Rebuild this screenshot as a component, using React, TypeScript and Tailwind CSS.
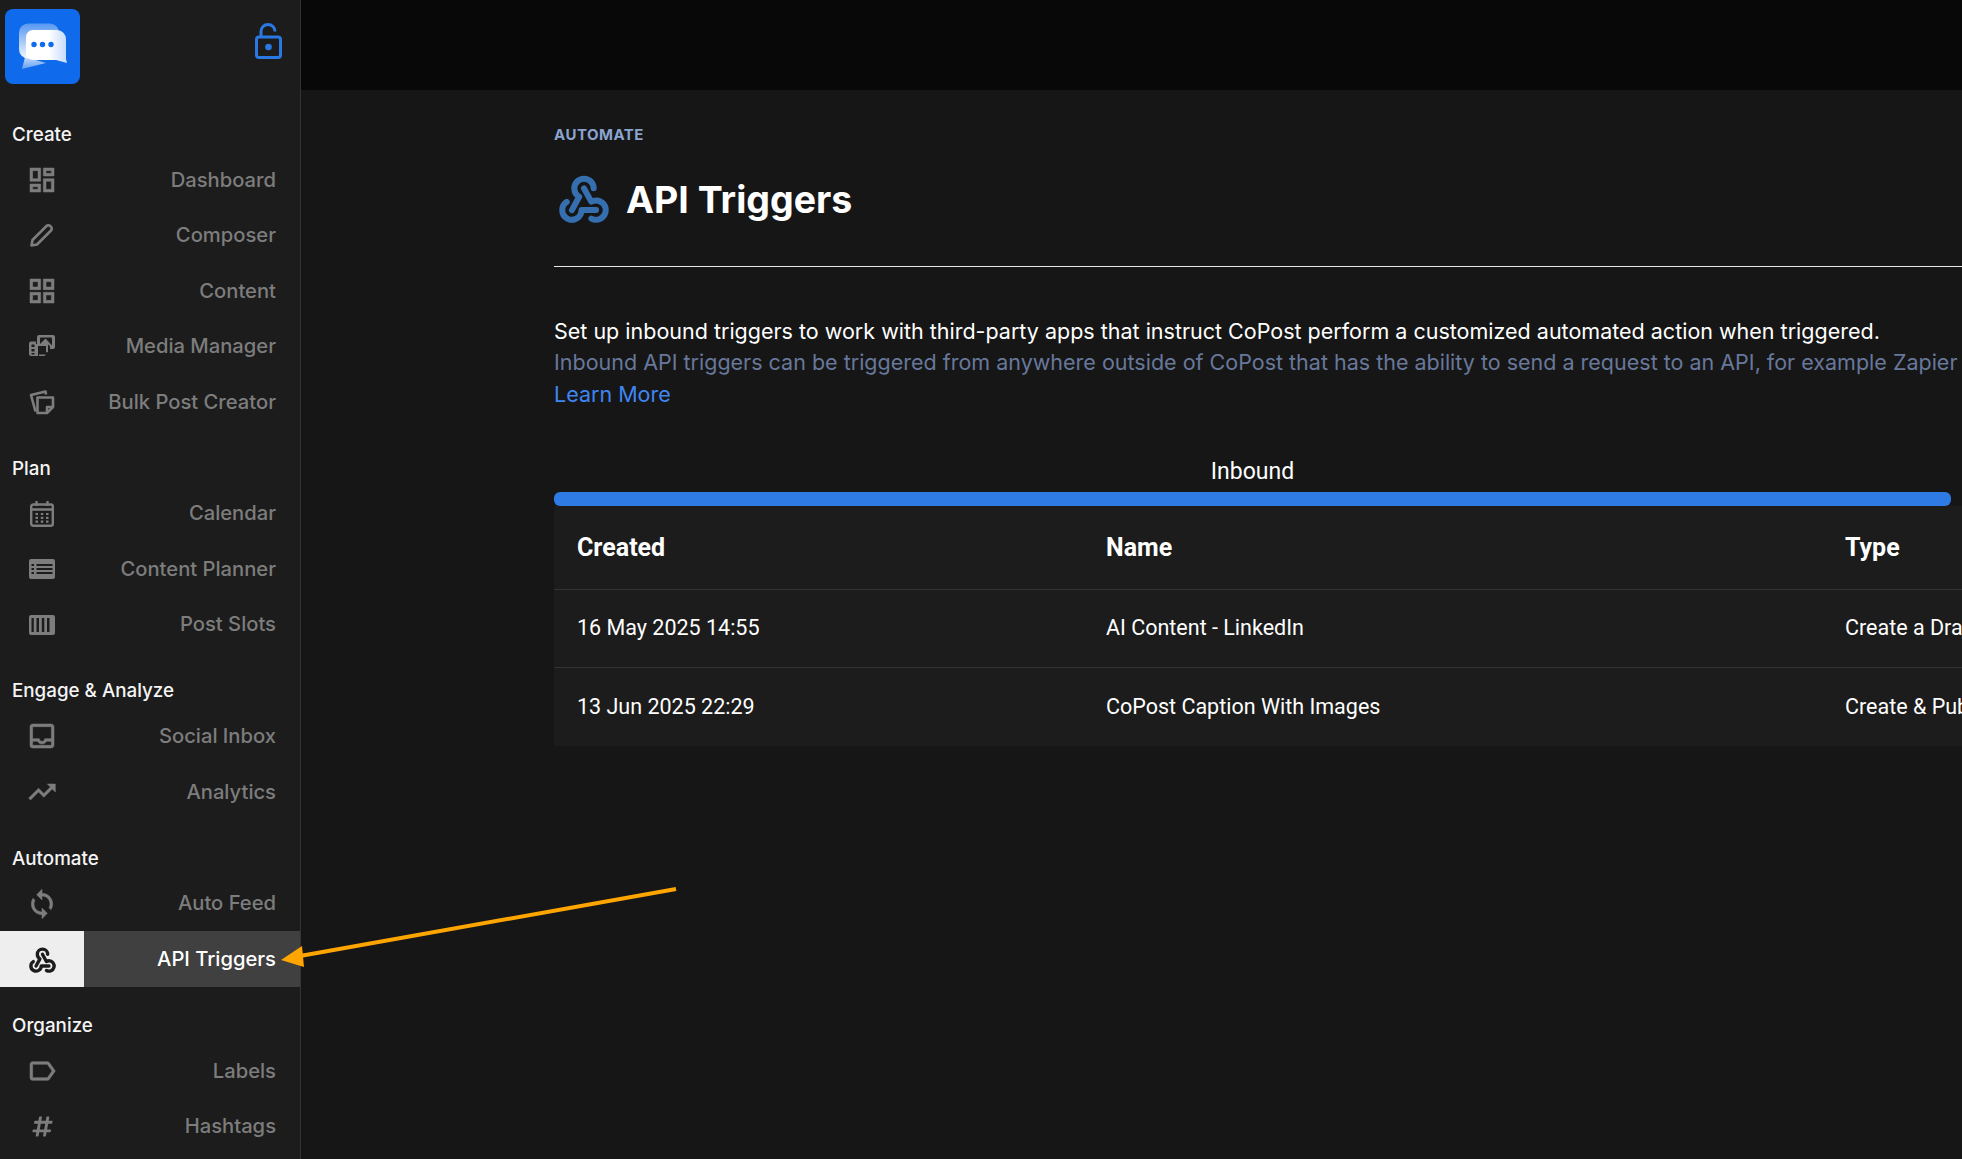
import { Fragment, type ReactNode } from 'react'
import {
  MdOutlineDashboard,
  MdOutlineGridView,
  MdOutlineInbox,
  MdTrendingUp,
  MdOutlineLabel,
  MdSync,
} from 'react-icons/md'
import { TbWebhook } from 'react-icons/tb'
import { FaHashtag } from 'react-icons/fa'

type NavItem = { label: string; icon: ReactNode; active?: boolean }
type NavGroup = { title: string; items: NavItem[] }

// the md icons start with an invisible fill-none square, so only thicken the paths after it
const ico = 'h-[32px] w-[32px] [&_path+path]:stroke-current [&_path+path]:stroke-[0.4px]'

function PencilIcon() {
  return (
    <svg viewBox="0 0 24 24" className="h-[24px] w-[24px]" fill="none" stroke="currentColor" strokeWidth="2.600" strokeLinejoin="round">
      <path d="M1.500 22.500 2.500 17 16.500 3a2.600 2.600 0 0 1 3.700 0l.8.800a2.600 2.600 0 0 1 0 3.700L7 21.500z" />
    </svg>
  )
}

function MediaIcon() {
  return (
    <svg viewBox="0 0 26 22" className="h-[22px] w-[26px]" fill="currentColor">
      <path fillRule="evenodd" d="M10 0h14a2 2 0 0 1 2 2v10a2 2 0 0 1-2 2h-3v-1.500a3 3 0 0 0-3-3H8V2a2 2 0 0 1 2-2zM11 9l5.500-5.500L23 10.500V3.500a1 1 0 0 0-1-1H12a1 1 0 0 0-1 1z" />
      <path fillRule="evenodd" d="M2 6.500h5v2.500h12v8a1.500 1.500 0 0 1-2 0v-6h-8v10H2a2 2 0 0 1-2-2V8.500a2 2 0 0 1 2-2zM2.500 9.500v2.500h3V9.500zm0 4.500v2.500h3V14zm0 4v1.500h3V18z" />
      <path d="M10 19.500h7a3 3 0 0 1-2 1.500h-5z" />
    </svg>
  )
}

function BulkIcon() {
  return (
    <svg viewBox="0 0 26 26" className="h-[26px] w-[26px]" fill="none" stroke="currentColor" strokeWidth="2.600" strokeLinejoin="round">
      <path d="M6.500 22.500 2 6l14.500-3.500.6 3" />
      <path d="M8.500 8.500h15.500v9.500l-6 6H8.500z" />
      <path d="M18 24v-6h6" />
    </svg>
  )
}

function CalendarIcon() {
  return (
    <svg viewBox="0 0 24 26" className="h-[26px] w-[24px]" fill="none" stroke="currentColor" strokeWidth="2.400">
      <rect x="1.200" y="3.500" width="21.600" height="21.300" rx="2" />
      <path d="M1 8.500h22M6.500 0v5M17.500 0v5" />
      <path d="M5.500 13h2.500M10.800 13h2.500M16 13h2.500M5.500 16.800h2.500M10.800 16.800h2.500M16 16.800h2.500M5.500 20.600h2.500M10.800 20.600h2.500M16 20.600h2.500" strokeWidth="2.200" />
    </svg>
  )
}

function PlannerIcon() {
  return (
    <svg viewBox="0 0 26 20" className="h-[20px] w-[26px]" fill="currentColor">
      <path fillRule="evenodd" d="M2 0h22a2 2 0 0 1 2 2v16a2 2 0 0 1-2 2H2a2 2 0 0 1-2-2V2a2 2 0 0 1 2-2zM2.500 5v2h2.500V5zm5 0v2h16V5zM2.500 9v2h2.500V9zm5 0v2h16V9zm-5 4v2h2.500v-2zm5 0v2h16v-2z" />
    </svg>
  )
}

function SlotsIcon() {
  return (
    <svg viewBox="0 0 26 20" className="h-[20px] w-[26px]" fill="currentColor">
      <path fillRule="evenodd" d="M2 0h22a2 2 0 0 1 2 2v16a2 2 0 0 1-2 2H2a2 2 0 0 1-2-2V2a2 2 0 0 1 2-2zM2.500 3v14h2.300V3zm5 0v14h2.500V3zm5.300 0v14h2.500V3zm5.200 0v14h2.500V3z" />
    </svg>
  )
}

const groups: NavGroup[] = [
  {
    title: 'Create',
    items: [
      { label: 'Dashboard', icon: <MdOutlineDashboard className={ico} /> },
      { label: 'Composer', icon: <PencilIcon /> },
      { label: 'Content', icon: <MdOutlineGridView className={ico} /> },
      { label: 'Media Manager', icon: <MediaIcon /> },
      { label: 'Bulk Post Creator', icon: <BulkIcon /> },
    ],
  },
  {
    title: 'Plan',
    items: [
      { label: 'Calendar', icon: <CalendarIcon /> },
      { label: 'Content Planner', icon: <PlannerIcon /> },
      { label: 'Post Slots', icon: <SlotsIcon /> },
    ],
  },
  {
    title: 'Engage & Analyze',
    items: [
      { label: 'Social Inbox', icon: <MdOutlineInbox className={ico} /> },
      { label: 'Analytics', icon: <MdTrendingUp className={ico} /> },
    ],
  },
  {
    title: 'Automate',
    items: [
      { label: 'Auto Feed', icon: <MdSync className={ico} /> },
      { label: 'API Triggers', icon: <TbWebhook className="h-[31px] w-[31px] [&_path]:[stroke-width:2.600]" />, active: true },
    ],
  },
  {
    title: 'Organize',
    items: [
      { label: 'Labels', icon: <MdOutlineLabel className={ico} /> },
      { label: 'Hashtags', icon: <FaHashtag className="h-[23px] w-[23px]" /> },
    ],
  },
]

const rows = [
  { created: '16 May 2025 14:55', name: 'AI Content - LinkedIn', type: 'Create a Draft Post' },
  { created: '13 Jun 2025 22:29', name: 'CoPost Caption With Images', type: 'Create & Publish Post' },
]

function Logo() {
  return (
    <svg viewBox="0 0 75 75" className="h-[75px] w-[75px]">
      <defs>
        <linearGradient id="bubbleBack" x1="0" y1="0" x2="0" y2="1">
          <stop offset="0" stopColor="#ffffff" stopOpacity="0.3" />
          <stop offset="1" stopColor="#ffffff" stopOpacity="0.95" />
        </linearGradient>
        <linearGradient id="bubbleTail" x1="0" y1="0" x2="0" y2="1">
          <stop offset="0" stopColor="#ffffff" stopOpacity="0.75" />
          <stop offset="1" stopColor="#ffffff" stopOpacity="0.35" />
        </linearGradient>
        <linearGradient id="bubbleFront" x1="0" y1="0" x2="1" y2="0">
          <stop offset="0.55" stopColor="#ffffff" />
          <stop offset="1" stopColor="#c4dafc" />
        </linearGradient>
      </defs>
      <rect width="75" height="75" rx="8" fill="#0f6bec" />
      <rect x="14" y="14.500" width="40" height="35" rx="9" fill="url(#bubbleBack)" />
      <path d="M20 48 17 60l24-6z" fill="url(#bubbleTail)" />
      <path d="M28 21h24a9 9 0 0 1 9 9v20l1 4-11-3H28a7 7 0 0 1-7-7V28a7 7 0 0 1 7-7z" fill="url(#bubbleFront)" />
      <circle cx="29" cy="35.500" r="2.700" fill="#0f6bec" />
      <circle cx="37.500" cy="35.500" r="2.700" fill="#0f6bec" />
      <circle cx="46" cy="35.500" r="2.700" fill="#0f6bec" />
    </svg>
  )
}

function Sidebar() {
  return (
    <aside className="flex h-full w-[301px] shrink-0 flex-col overflow-hidden border-r border-[#333333] bg-[#1c1c1c]">
      <div className="flex h-[116px] shrink-0 items-start justify-between pl-[5px] pr-[18px] pt-[9px]">
        <Logo />
        <svg viewBox="0 0 27 36" className="mt-[14px] h-[36px] w-[27px]" fill="none" stroke="#2a78e4" strokeWidth="3">
          <path d="M6 13V8.500a7 7 0 0 1 14 0" />
          <rect x="1.500" y="14" width="24" height="20.500" rx="2.500" />
          <circle cx="13.500" cy="24" r="3.300" fill="#2a78e4" stroke="none" />
        </svg>
      </div>
      {groups.map((group) => (
        <Fragment key={group.title}>
          <div className="flex h-[36px] shrink-0 items-center pl-[12px] pt-[2px] text-[18.800px] font-medium text-[#f5f5f5]">
            {group.title}
          </div>
          {group.items.map((item) => (
            <div
              key={item.label}
              className={`flex h-[55.5px] shrink-0 items-center justify-between pr-[24px] text-[20.200px] font-medium ${
                item.active ? 'bg-[#404040] text-white' : 'text-[#7d7d7d]'
              }`}
            >
              <div
                className={`flex h-full w-[84px] items-center justify-center ${
                  item.active ? 'bg-[#eeeeee] text-[#1c1c1c]' : 'text-[#7d7d7d]'
                }`}
              >
                {item.icon}
              </div>
              <span>{item.label}</span>
            </div>
          ))}
          <div className="h-[20.25px] shrink-0" />
        </Fragment>
      ))}
    </aside>
  )
}

function Main() {
  return (
    <main className="flex min-w-0 flex-1 flex-col overflow-hidden bg-[#161616]">
      <div className="h-[90px] shrink-0 bg-[#080808]" />
      <div className="pl-[253px]">
        <p className="mt-[36px] text-[15px] font-bold leading-[18px] tracking-[0.5px] text-[#8aa4cf]">AUTOMATE</p>
        <div className="mt-[26px] flex h-[60px] items-center gap-[13px] pl-[1px]">
          <TbWebhook className="mb-[4px] h-[58px] w-[58px] text-[#356fb0] [&_path]:[stroke-width:2.500]" />
          <h1 className="text-[37.500px] font-bold leading-none text-white">API Triggers</h1>
        </div>
        <div className="mt-[36px] h-px bg-[#e5e7eb]" />
        <div className="mt-[49px] whitespace-nowrap text-[21.500px] leading-[31.300px]">
          <p className="text-white">
            Set up inbound triggers to work with third-party apps that instruct CoPost perform a customized automated action when triggered.
          </p>
          <p className="text-[#68789b]">
            Inbound API triggers can be triggered from anywhere outside of CoPost that has the ability to send a request to an API, for example Zapier or Make.
          </p>
          <p className="text-[#3f86f2]">Learn More</p>
        </div>
        <div className="mt-[47px] w-[1397px] text-center font-['Roboto',sans-serif] text-[23px] leading-[30px] text-white">Inbound</div>
        <div className="mt-[5px] h-[14px] w-[1397px] rounded-md bg-[#2f7be6]" />
        <div className="bg-[#1c1c1c] font-['Roboto',sans-serif] text-white">
          <div className="flex h-[84px] items-center border-b border-[#333333] text-[25px] font-bold">
            <span className="w-[552px] shrink-0 pl-[23px]">Created</span>
            <span className="w-[739px] shrink-0">Name</span>
            <span className="shrink-0 whitespace-nowrap">Type</span>
          </div>
          {rows.map((row, i) => (
            <div
              key={row.created}
              className={`flex h-[78px] items-center whitespace-nowrap text-[21.500px] ${i === 0 ? 'border-b border-[#333333]' : ''}`}
            >
              <span className="w-[552px] shrink-0 pl-[23px]">{row.created}</span>
              <span className="w-[739px] shrink-0">{row.name}</span>
              <span className="shrink-0">{row.type}</span>
            </div>
          ))}
        </div>
      </div>
    </main>
  )
}

export default function App() {
  return (
    <div className="relative flex h-[1159px] w-[1962px] overflow-hidden bg-[#161616] font-['Inter',sans-serif]">
      <Sidebar />
      <Main />
      {/* annotation arrow drawn over the screenshot */}
      <svg className="absolute left-0 top-0" width="1962" height="1159" fill="none">
        <path d="M676 889 300 956" stroke="#ffa500" strokeWidth="4" />
        <path d="M281 960 302 946 304 967z" fill="#ffa500" />
      </svg>
    </div>
  )
}
